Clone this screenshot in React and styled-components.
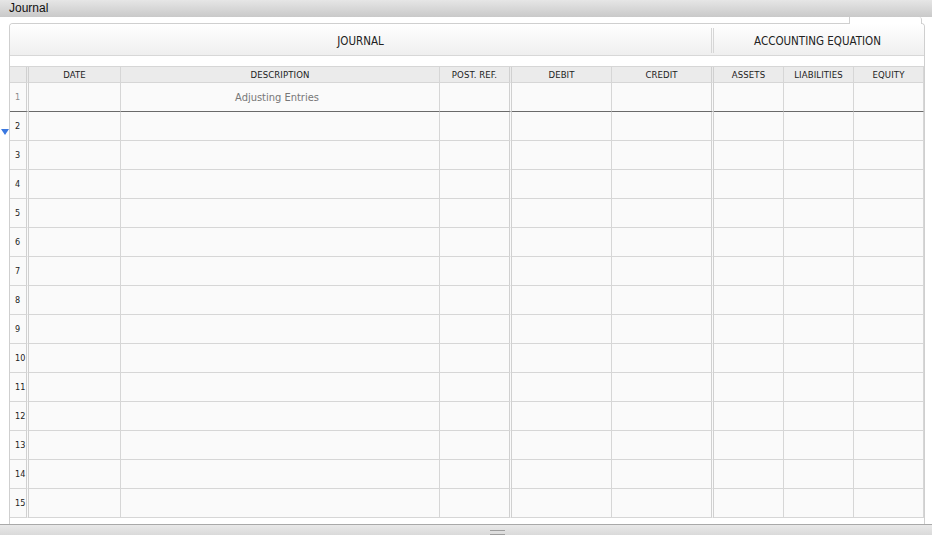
import React from "react";
import styled, { createGlobalStyle } from "styled-components";

const Global = createGlobalStyle`
  html, body { margin: 0; padding: 0; background: #fff; overflow: hidden; }
  #root { width: 932px; height: 535px; }
`;

const NARROW = `"Liberation Sans Narrow", "DejaVu Sans Condensed", "Liberation Sans", sans-serif`;

const Window = styled.div`
  width: 932px;
  height: 535px;
  display: flex;
  flex-direction: column;
  background: #fff;
`;

const TitleBar = styled.div`
  height: 17px;
  flex: none;
  background: linear-gradient(#e6e6e6, #c9c9c9);
  font-family: "Liberation Sans", Arial, sans-serif;
  font-size: 12px;
  line-height: 16px;
  color: #111;
  padding-left: 9px;
`;

const Main = styled.div`
  flex: 1;
  position: relative;
  display: flex;
  padding: 6px 7px 0 9px;
  min-height: 0;
`;

const Marker = styled.div`
  position: absolute;
  left: 1px;
  top: 112px;
  width: 0;
  height: 0;
  border-left: 4px solid transparent;
  border-right: 4px solid transparent;
  border-top: 6px solid #3b78e0;
`;

const Tab = styled.div`
  position: absolute;
  left: 849px;
  top: 0;
  width: 71px;
  height: 7px;
  background: #fff;
  border-left: 1px solid #cfcfcf;
  border-right: 1px solid #cfcfcf;
  border-top-right-radius: 3px;
`;

const Panel = styled.div`
  flex: 1;
  display: flex;
  flex-direction: column;
  border: 1px solid #cfcfcf;
  border-bottom: none;
  border-radius: 4px 4px 0 0;
  overflow: hidden;
`;

const Band = styled.div`
  height: 31px;
  flex: none;
  display: grid;
  grid-template-columns: 701px 1fr;
  background: linear-gradient(#ffffff, #efefef);
  border-bottom: 1px solid #d8d8d8;
  font-family: ${NARROW};
  font-size: 11.5px;
  color: #222;
`;

const BandTitle = styled.div`
  display: flex;
  align-items: center;
  justify-content: center;
  padding-top: 2px;
  ${(p) => p.$divided && `
    position: relative;
    &::before {
      content: "";
      position: absolute;
      left: 0;
      top: 4px;
      bottom: 2px;
      width: 3px;
      border-left: 1px solid #d6d6d6;
      border-right: 1px solid #d6d6d6;
      box-sizing: border-box;
    }
  `}
`;

const Table = styled.div`
  margin-top: 10px;
  display: grid;
  grid-template-columns: 19px 92px 319px 72px 100px 102px 70px 70px 70px;
  grid-template-rows: 16px repeat(15, 29px);
  border-top: 1px solid #d6d6d6;
  width: 914px;
  font-family: ${NARROW};
`;

const HeadCell = styled.div`
  box-sizing: border-box;
  background: #ebebeb;
  border-right: ${(p) => (p.$double ? "3px double #d0d0d0" : "1px solid #d6d6d6")};
  border-bottom: 1px solid #d6d6d6;
  font-size: 9.5px;
  color: #222;
  display: flex;
  align-items: center;
  justify-content: center;
  letter-spacing: 0.1px;
`;

const Cell = styled.div`
  box-sizing: border-box;
  background: #fafafa;
  border-right: ${(p) => (p.$double ? "3px double #d0d0d0" : "1px solid #d6d6d6")};
  border-bottom: 1px solid ${(p) => (p.$dark ? "#6a6a6a" : "#d6d6d6")};
  display: flex;
  align-items: center;
  justify-content: center;
  font-size: 11px;
  color: #777;
  padding-right: 6px;
`;

const NumCell = styled(Cell)`
  justify-content: flex-start;
  padding-left: 5px;
  padding-right: 0;
  font-size: 9px;
  color: ${(p) => (p.$muted ? "#8a8a8a" : "#222")};
`;

const BottomBar = styled.div`
  height: 11px;
  flex: none;
  box-sizing: border-box;
  border-top: 1px solid #a9a9a9;
  background: linear-gradient(#e9e9e9, #dadada);
  display: flex;
  padding-top: 5px;
  padding-left: 490px;
`;

const Grip = styled.div`
  width: 15px;
  height: 3px;
  border-top: 1px solid #9d9d9d;
  border-bottom: 1px solid #9d9d9d;
`;

const columns = [
  { key: "num", label: "", double: true },
  { key: "date", label: "DATE" },
  { key: "desc", label: "DESCRIPTION" },
  { key: "post", label: "POST. REF.", double: true },
  { key: "debit", label: "DEBIT" },
  { key: "credit", label: "CREDIT", double: true },
  { key: "assets", label: "ASSETS" },
  { key: "liab", label: "LIABILITIES" },
  { key: "equity", label: "EQUITY" },
];

const rows = Array.from({ length: 15 }, (_, i) => i + 1);

export default function App() {
  return (
    <Window>
      <Global />
      <TitleBar>Journal</TitleBar>
      <Main>
        <Tab />
        <Marker />
        <Panel>
          <Band>
            <BandTitle>JOURNAL</BandTitle>
            <BandTitle $divided>ACCOUNTING EQUATION</BandTitle>
          </Band>
          <Table>
            {columns.map((c) => (
              <HeadCell key={c.key} $double={c.double}>
                {c.label}
              </HeadCell>
            ))}
            {rows.map((r) =>
              columns.map((c) =>
                c.key === "num" ? (
                  <NumCell key={`${r}-${c.key}`} $double $dark={r === 1} $muted={r === 1}>
                    {r}
                  </NumCell>
                ) : (
                  <Cell key={`${r}-${c.key}`} $double={c.double} $dark={r === 1}>
                    {r === 1 && c.key === "desc" ? "Adjusting Entries" : ""}
                  </Cell>
                )
              )
            )}
          </Table>
        </Panel>
      </Main>
      <BottomBar>
        <Grip />
      </BottomBar>
    </Window>
  );
}
